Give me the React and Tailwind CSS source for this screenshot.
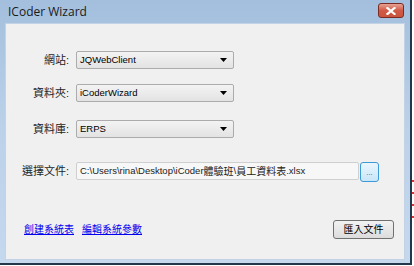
const cjk = { fontFamily: '"Liberation Sans", "Noto Sans CJK TC", sans-serif' };

const Combo = ({ value }) => (
  <div className="w-[158px] h-[18px] flex items-center justify-between rounded-[2px] border border-[#acacac] bg-gradient-to-b from-[#f3f3f3] to-[#e3e3e3] pl-[3px] pr-[6px] text-[9.5px] text-black">
    <span>{value}</span>
    <svg width="7" height="4" viewBox="0 0 7 4">
      <path d="M0 0H7L3.5 4Z" fill="#000" />
    </svg>
  </div>
);

const Row = ({ label, children, className }) => (
  <div className={`flex items-center ${className}`}>
    <span className="w-[65px] pr-[2px] text-right text-[11px] text-[#1e1e1e]">{label}</span>
    <div className="ml-[5px]">{children}</div>
  </div>
);

export default function App() {
  return (
    <div className="w-[414px] h-[266px] bg-white flex overflow-hidden" style={cjk}>
      <div className="w-[412px] h-[265px] flex flex-col px-[5px] pb-[3px] bg-gradient-to-b from-[#a3bfdd] via-[#bcd2ea] to-[#c4d8ee] border-r-[2px] border-b-[2px] border-[#22384a]">
        <div className="h-[23px] flex items-center justify-between pl-[3px] pr-[1px]">
          <span className="text-[12px] text-[#1a1a1a] pt-[1px]" style={{ fontFamily: '"Open Sans", "Noto Sans", sans-serif' }}>
            ICoder Wizard
          </span>
          <div className="w-[26px] h-[15px] mb-[2px] rounded-[3px] border border-[#7b2b22] bg-gradient-to-b from-[#e5a294] via-[#d05a45] to-[#c9553f] flex items-center justify-center">
            <svg width="10" height="8" viewBox="0 0 10 8">
              <path d="M1.5 1L8.5 7M8.5 1L1.5 7" stroke="#fff" strokeWidth="2.2" strokeLinecap="square" />
            </svg>
          </div>
        </div>
        <div className="flex-1 bg-[#f0f0f0] border border-[#c2d3e6] flex flex-col">
          <Row label="網站:" className="mt-[27px]">
            <Combo value="JQWebClient" />
          </Row>
          <Row label="資料夾:" className="mt-[15px]">
            <Combo value="iCoderWizard" />
          </Row>
          <Row label="資料庫:" className="mt-[18px]">
            <Combo value="ERPS" />
          </Row>
          <Row label="選擇文件:" className="mt-[22px]">
            <div className="flex items-center gap-[1px]">
              <div className="w-[283px] h-[18px] flex items-center rounded-[2px] border border-[#cfcfcf] bg-[#f7f7f7] pl-[3px] text-[9.5px] text-[#222]">
                C:\Users\rina\Desktop\iCoder<span className="text-[10px]">體驗班</span>\<span className="text-[10px]">員工資料表</span>.xlsx
              </div>
              <div className="w-[19px] h-[20px] mt-[2px] rounded-[3px] border border-[#3c9ad6] bg-gradient-to-b from-[#eaf6fd] to-[#c8e6f8] flex items-end justify-center pb-[4px] text-[8px] leading-none text-[#666]">
                ...
              </div>
            </div>
          </Row>
          <div className="mt-[38px] flex items-center justify-between pl-[18px] pr-[10px]">
            <div className="flex gap-[8px] text-[10px] text-[#0000ee] underline">
              <span>創建系統表</span>
              <span>編輯系統參數</span>
            </div>
            <div className="w-[61px] h-[19px] rounded-[3px] border border-[#707070] bg-gradient-to-b from-[#f2f2f2] to-[#dcdcdc] flex items-center justify-center text-[10px] text-black">
              匯入文件
            </div>
          </div>
        </div>
      </div>
      <div className="w-[2px] h-[266px] flex flex-col gap-[10px] pt-[180px]">
        <div className="h-[2px] bg-[#d33]" />
        <div className="h-[2px] bg-[#d33]" />
        <div className="h-[2px] bg-[#d33]" />
        <div className="h-[2px] bg-[#d33]" />
      </div>
    </div>
  );
}
